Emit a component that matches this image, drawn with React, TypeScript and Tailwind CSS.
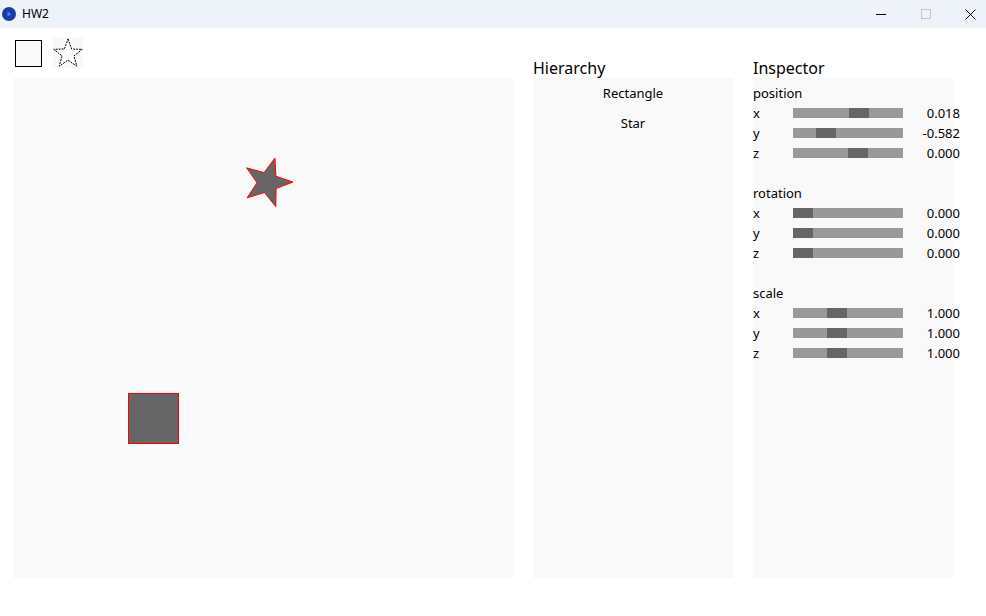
import React from "react";

type Row = { axis: string; handle: number; value: string };
type Section = { title: string; rows: Row[] };

const sections: Section[] = [
  {
    title: "position",
    rows: [
      { axis: "x", handle: 56, value: "0.018" },
      { axis: "y", handle: 23, value: "-0.582" },
      { axis: "z", handle: 55, value: "0.000" },
    ],
  },
  {
    title: "rotation",
    rows: [
      { axis: "x", handle: 0, value: "0.000" },
      { axis: "y", handle: 0, value: "0.000" },
      { axis: "z", handle: 0, value: "0.000" },
    ],
  },
  {
    title: "scale",
    rows: [
      { axis: "x", handle: 34, value: "1.000" },
      { axis: "y", handle: 34, value: "1.000" },
      { axis: "z", handle: 34, value: "1.000" },
    ],
  },
];

function starPoints(cx: number, cy: number, outer: number, inner: number, rot: number) {
  const pts: string[] = [];
  for (let i = 0; i < 10; i++) {
    const r = i % 2 === 0 ? outer : inner;
    const a = ((rot + i * 36 - 90) * Math.PI) / 180;
    pts.push(`${(cx + r * Math.cos(a)).toFixed(2)},${(cy + r * Math.sin(a)).toFixed(2)}`);
  }
  return pts.join(" ");
}

function TitleBar() {
  return (
    <div className="flex h-[28px] items-center bg-[#eef2f9]">
      <svg width="14" height="14" viewBox="0 0 14 14" className="ml-[2px]">
        <circle cx="7" cy="7" r="7" fill="#1f3aa8" />
        <path d="M5.5 4.5 L9.5 7 L5.5 9.5 Z" fill="#4d7cf0" />
      </svg>
      <span className="ml-[6px] text-[12px] text-black">HW2</span>
      <div className="ml-auto mr-[-7px] flex h-full">
        <div className="flex w-[45px] items-center justify-center">
          <svg width="10" height="10" viewBox="0 0 10 10">
            <path d="M0 5.5 H10" stroke="#000" strokeWidth="1" />
          </svg>
        </div>
        <div className="flex w-[45px] items-center justify-center">
          <svg width="10" height="10" viewBox="0 0 10 10">
            <rect x="0.5" y="0.5" width="9" height="9" fill="none" stroke="#c4c4c4" strokeWidth="1" />
          </svg>
        </div>
        <div className="flex w-[45px] items-center justify-center">
          <svg width="11" height="11" viewBox="0 0 11 11">
            <path d="M0.5 0.5 L10.5 10.5 M10.5 0.5 L0.5 10.5" stroke="#000" strokeWidth="1" />
          </svg>
        </div>
      </div>
    </div>
  );
}

function Toolbar() {
  return (
    <div className="flex h-[50px] items-start gap-[11px] pl-[2px] pt-[10px]">
      <div className="mt-[2px] h-[27px] w-[27px] border-[1.5px] border-black bg-[#f9f9f9]" />
      <div className="h-[30px] w-[30px] bg-[#f8f8f8]">
        <svg width="30" height="30" viewBox="0 0 30 30">
          <polygon
            points={starPoints(15, 16, 15, 6.2, 0)}
            fill="#fff"
            stroke="#000"
            strokeWidth="1"
            strokeDasharray="2 1"
          />
        </svg>
      </div>
    </div>
  );
}

function Canvas() {
  return (
    <div className="h-[500px] w-[500px] bg-[#f9f9f9]">
      <svg width="500" height="500" viewBox="0 0 500 500">
        <polygon
          points={starPoints(254.5, 104.5, 25.5, 10.5, 17)}
          fill="#666666"
          stroke="#ff0000"
          strokeWidth="1"
        />
        <rect x="115.5" y="315.5" width="50" height="50" fill="#666666" stroke="#ff0000" strokeWidth="1" />
      </svg>
    </div>
  );
}

function Hierarchy() {
  return (
    <div className="flex w-[200px] flex-col">
      <div className="flex h-[50px] items-end">
        <span className="text-[16px] leading-[20px] text-black">Hierarchy</span>
      </div>
      <div className="h-[500px] bg-[#f9f9f9] pt-[1px]">
        {["Rectangle", "Star"].map((name) => (
          <div key={name} className="flex h-[30px] items-center justify-center text-[13px] text-black">
            {name}
          </div>
        ))}
      </div>
    </div>
  );
}

function Inspector() {
  return (
    <div className="flex w-[200px] flex-col">
      <div className="flex h-[50px] items-end">
        <span className="text-[16px] leading-[20px] text-black">Inspector</span>
      </div>
      <div className="h-[500px] bg-[#f9f9f9] pt-[5px]">
        {sections.map((s) => (
          <div key={s.title} className="mb-[20px]">
            <div className="h-[20px] text-[13px] leading-[20px] text-black">{s.title}</div>
            {s.rows.map((r) => (
              <div key={r.axis} className="flex h-[20px] items-center pt-[1px] text-[13px] text-black">
                <span className="w-[40px] shrink-0">{r.axis}</span>
                <div className="relative mt-[-1px] h-[10px] w-[110px] shrink-0 bg-[#999999]">
                  <div
                    className="absolute top-0 h-[10px] w-[20px] bg-[#666666]"
                    style={{ left: r.handle }}
                  />
                </div>
                <span className="w-[57px] shrink-0 text-right">{r.value}</span>
              </div>
            ))}
          </div>
        ))}
      </div>
    </div>
  );
}

export default function App() {
  return (
    <div
      className="h-[616px] w-[986px] overflow-hidden bg-white"
      style={{ fontFamily: '"Noto Sans", "Open Sans", sans-serif' }}
    >
      <TitleBar />
      <div className="flex gap-[20px] pl-[13px]">
        <div className="flex flex-col">
          <Toolbar />
          <Canvas />
        </div>
        <Hierarchy />
        <Inspector />
      </div>
    </div>
  );
}
